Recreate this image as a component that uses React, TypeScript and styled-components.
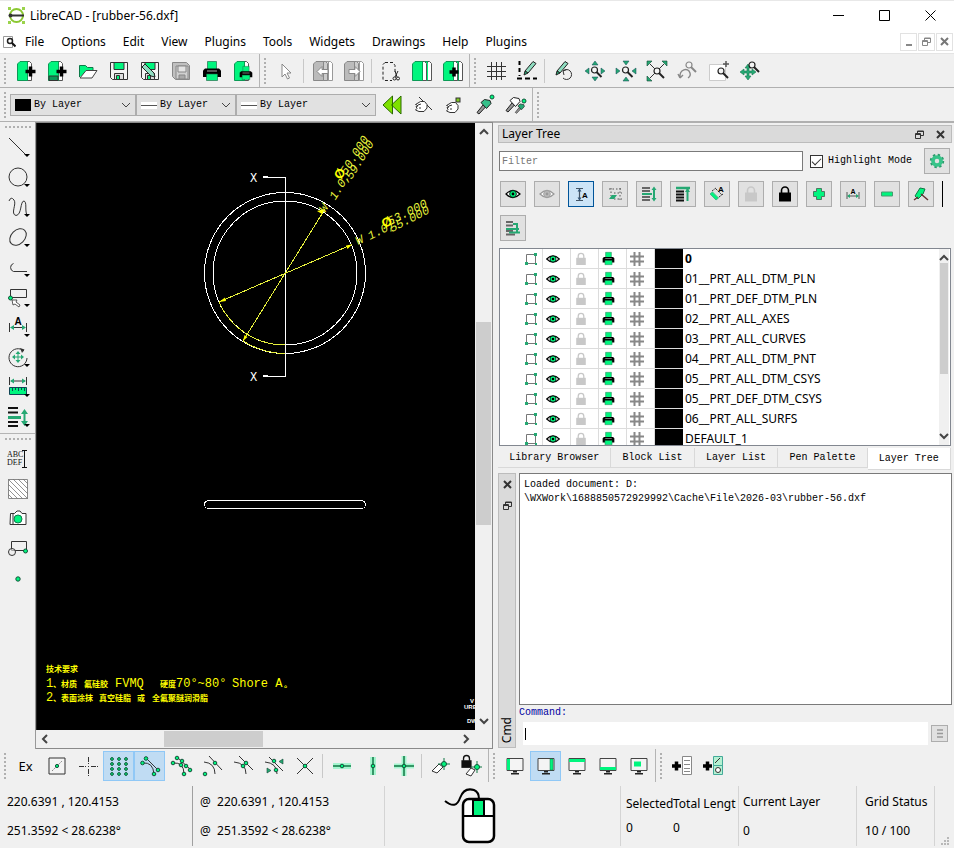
import React from "react";
import styled, { createGlobalStyle, css } from "styled-components";

const UI = `"Noto Sans", "Open Sans", sans-serif`;
const MONO = `"Liberation Mono", monospace`;
const GREEN = "#00f57e";
const TEAL = "#25a873";
const INK = "#333";

const Global = createGlobalStyle`
  *, *::before, *::after { box-sizing: border-box; }
  body { margin: 0; background: #f0f0f0; color: #000; font: 12px/16px ${UI}; }
  button, input, select { font: inherit; color: inherit; margin: 0; padding: 0; border: 0; background: none; border-radius: 0; }
  svg { display: block; flex: none; }
`;

/* ---------- small drawings shared by icons ---------- */

const Mag = ({ x, y, c = "#222" }: { x: number; y: number; c?: string }) => (
  <g fill="none" stroke={c}>
    <circle cx={x} cy={y} r="3" fill="#f4f4f4" strokeWidth="1.2" />
    <path d={`M${x + 2} ${y + 2}l5 5`} strokeWidth="2" />
  </g>
);
const Dot = ({ x, y, r = 2 }: { x: number; y: number; r?: number }) => (
  <circle cx={x} cy={y} r={r} fill={GREEN} stroke="#14533a" />
);
const Plus = ({ x, y, s = 5, w = 3, c = "#000" }: { x: number; y: number; s?: number; w?: number; c?: string }) => (
  <path d={`M${x - s} ${y}h${s * 2}M${x} ${y - s}v${s * 2}`} stroke={c} strokeWidth={w} fill="none" />
);
const Page = ({ x = 0, fill = GREEN, edge = "#555", back = "#fff" }: { x?: number; fill?: string; edge?: string; back?: string }) => (
  <g transform={`translate(${x} 0)`} stroke={edge}>
    <path d="M9 .5h3.500l2 2v17H9z" fill={back} />
    <path d="M3 .5h7.500v19H.5V3z" fill={fill} stroke={fill === GREEN ? "#0b9a56" : edge} />
  </g>
);
const Printer = () => (
  <g>
    <path d="M5.500.5h9v9h-9z" fill={GREEN} stroke="#155c3c" strokeWidth=".6" />
    <path d="M3 7.500h14l2 2V16H1V9.500z" fill="#000" />
    <path d="M5 10h10" stroke="#aaa" />
    <path d="M4.500 13h11v6.500h-11z" fill={GREEN} stroke="#155c3c" strokeWidth=".6" />
  </g>
);
const Floppy = ({ fill = GREEN, edge = "#333", body = "#f4f4f4" }: { fill?: string; edge?: string; body?: string }) => (
  <g stroke={edge}>
    <path d="M1.500 1.500h17v17h-15l-2-2z" fill={body} />
    <path d="M5 1.500h10v7H5z" fill={fill} />
    <path d="M5.500 12.500h9v6h-9z" fill="#ddd" />
    <path d="M7.500 14.500h3v4h-3z" fill={fill} />
  </g>
);
const Pencil = ({ x = 0, y = 0 }: { x?: number; y?: number }) => (
  <g transform={`translate(${x} ${y})`} stroke="#222">
    <path d="M3 11L11 1.500l3 2L6 13z" fill="#8fdcc0" />
    <path d="M3 11l-1 4 4-2z" fill={TEAL} />
  </g>
);
const Lock = ({ c }: { c: string }) => (
  <g>
    <path d="M6.500 9V6.500a3.500 3.500 0 0 1 7 0V9" fill="none" stroke={c} strokeWidth="1.600" />
    <path d="M4 8.500h12v9H4z" fill={c} />
  </g>
);
const Eye = ({ c, pupil = "#000" }: { c: string; pupil?: string }) => (
  <g>
    <path d="M3 10Q10 3 17 10Q10 17 3 10z" fill="#fff" stroke={pupil} strokeWidth="1.200" />
    <circle cx="10" cy="10" r="3.400" fill={c} stroke={pupil} strokeWidth=".8" />
    <circle cx="10" cy="10" r="1.400" fill={pupil} />
  </g>
);
const Monitor = ({ children }: { children: React.ReactNode }) => (
  <g>
    <path d="M2 2.500h16v12H2z" fill="#f4f4f4" stroke="#444" />
    {children}
    <path d="M8 15h4v1.500H8zM6 17h8v1.500H6z" fill="#222" />
  </g>
);
const Hand = ({ y = 0 }: { y?: number }) => (
  <g transform={`translate(0 ${y})`}>
    <path d="M2.500 9.500l5-3 4 0 2.500 3v3.500l-3 3.500H6l-3.500-1.500 1.500-1.500-1-2 2-.5-1-1z" fill="#fff" stroke="#333" />
    <path d="M5 10l3-1M6 13h2" stroke="#333" fill="none" />
  </g>
);
const Brush = ({ fill = TEAL }: { fill?: string }) => (
  <g stroke="#222">
    <path d="M2 17.500l6-7.500 2.500 2L4 19z" fill="#999" />
    <path d="M6 7.500l3.500-3L15 5.500l1 3-4.500 5z" fill={fill} />
  </g>
);

const K = INK;
const ICONS: Record<string, React.ReactNode> = {
  new: <><Page x={1} /><Plus x={14.5} y={10.5} w={3.5} /></>,
  newTemplate: <><Page x={1} /><path d="M2 15h9v4.500H2z" fill="#0a9a58" stroke="#333" /><Plus x={14.5} y={10.5} w={3.5} /></>,
  open: <><path d="M1.500 16V4.500h6l2 2H15V9" fill={GREEN} stroke="#0b7a48" /><path d="M2 17L8 9.500h11L14 17z" fill="#fff" stroke="#444" /></>,
  save: <Floppy />,
  saveAs: <><Floppy /><path d="M5 3l9 9 1 4-4-1-9-9z" fill="#8fdcc0" stroke="#222" /></>,
  saveAll: <><path d="M1.500 1.500h14l3 3v14h-14l-3-3z" fill="#c0c0c0" stroke="#888" /><path d="M5 5h12v13H5z" fill="#d0d0d0" stroke="#888" /><path d="M7 5h8v6H7z" fill="#e4e4e4" stroke="#888" /><path d="M8 14h6v4H8z" fill="#aaa" stroke="#888" /></>,
  print: <Printer />,
  preview: <><Page x={1} /><g transform="translate(6 5) scale(.7)"><Printer /></g></>,
  cursor: <path d="M6 3v13l3-3 2.500 5 2-1-2.500-5h4z" fill="#fff" stroke="#888" />,
  undo: <><Page x={5} fill="#e2e2e2" edge="#999" /><Page x={0} fill="#bbb" edge="#888" back="#ccc" /><path d="M4 10.500l5-5v3h6v4H9v3z" fill="#fff" stroke="#888" /></>,
  redo: <><Page x={5} fill="#e2e2e2" edge="#999" /><Page x={0} fill="#bbb" edge="#888" back="#ccc" /><path d="M16 10.500l-5-5v3H5v4h6v3z" fill="#fff" stroke="#888" /></>,
  cut: <><path d="M4 1.500h8l2 3v7M4 1.500l-2 2v15l2 1h7" fill="none" stroke="#222" strokeDasharray="3 2" /><path d="M14 10l2 6M17 10l-3 6" stroke="#222" /><circle cx="13.500" cy="17.500" r="1.500" fill="none" stroke="#222" /><circle cx="17" cy="17.500" r="1.500" fill="none" stroke="#222" /></>,
  copy: <><Page x={5} /><path d="M13 2h3v17h-3z" fill={GREEN} /><Page x={0} /></>,
  paste: <><Page x={5} /><Page x={0} /><Plus x={11} y={11} s={4.5} w={3.5} /></>,
  grid: <path d="M5.500 1v18M10.500 1v18M15.500 1v18M1 5.500h19M1 10.500h19M1 15.500h19" stroke="#333" />,
  draft: <><path d="M2.500 0v15" stroke="#000" strokeWidth="2" strokeDasharray="4 3" /><path d="M0 17.500h20" stroke="#000" strokeWidth="2" strokeDasharray="5 3" /><Pencil x={5} y={-1} /></>,
  redraw: <><Pencil x={0} y={-1} /><path d="M9 10a5 5 0 1 1 0 7M9 10l4-1.500M9 10l1 4" fill="none" stroke="#333" /></>,
  zoomIn: <><path d="M7 4l3-4 3 4zM7 16l3 4 3-4zM4 7l-4 3 4 3zM16 7l4 3-4 3z" fill={TEAL} stroke="#145" strokeWidth=".5" /><Mag x={9.5} y={9} /></>,
  zoomOut: <><path d="M7 0h6l-3 4zM7 20h6l-3-4zM0 7v6l4-3zM20 7v6l-4-3z" fill={TEAL} stroke="#145" strokeWidth=".5" /><Mag x={9.5} y={9} /></>,
  zoomAuto: <><path d="M3 3l14 14M17 3L3 17" stroke={K} /><path d="M0 0h5L0 5zM20 0h-5l5 5zM0 20h5l-5-5z" fill={TEAL} stroke="#143" strokeWidth=".6" /><Mag x={10} y={10} /></>,
  zoomPrev: <><path d="M2 17C1 8 10 6 12 12Q13 15 10 17M2 17l-2-4M2 17l3-3" fill="none" stroke="#888" strokeWidth="1.400" /><Mag x={11} y={4} c="#888" /></>,
  zoomWin: <><path d="M.5 3.500h16v16H.5z" fill="#fff" stroke="#ccc" /><Plus x={17} y={3} s={3} w={1.5} c="#555" /><Mag x={12} y={10} /></>,
  zoomPan: <><path d="M0 11l4-3v2h3V7H5l3-4 3 4H9v3h3V8l4 3-4 3v-2H9v3h2l-3 4-3-4h2v-3H4v2z" fill={TEAL} stroke="#157a50" strokeWidth=".6" /><Mag x={12} y={4} /></>,
  back: <path d="M10.500 1v18L1 10zM19 1v18L9.500 10z" fill="#7ee000" stroke="#2a6a00" />,
  handLine: <><path d="M6 2l13 13" stroke={K} /><Hand /></>,
  handBox: <><Hand y={1} /><rect x="12" y="3" width="4" height="4" fill="#7ec820" stroke="#333" /></>,
  brush: <><Brush fill="#35c08a" /><Dot x={17} y={2} /></>,
  brushes: <><g transform="translate(-2 -2)"><Brush fill="#fff" /></g><g transform="translate(8 6) scale(.65)"><Brush fill={TEAL} /></g><Dot x={18} y={6} /></>,
  line: <path d="M1 1l17 17" stroke={K} />,
  circle: <circle cx="10" cy="10" r="9" fill="none" stroke={K} />,
  spline: <path d="M1 4Q3-1 6 3C9 7 2 17 8 18.500C14 18 12 4 16 4C19 5 17 12 18.500 17" fill="none" stroke={K} />,
  ellipse: <ellipse cx="10" cy="10" rx="9.500" ry="6.800" fill="none" stroke={K} transform="rotate(-45 10 10)" />,
  polyline: <path d="M5.500 6.500A4.200 4.200 0 0 0 5.500 14.500H19" fill="none" stroke={K} />,
  select: <><path d="M2.500 2.500h16v8h-16z" fill="none" stroke={K} /><Dot x={2.5} y={11} /><path d="M4 13l1 5 2-1 4 3 1-2-4-3 1-2z" fill="#fff" stroke={K} strokeWidth=".8" /></>,
  dim: <><path d="M1.500 6v9M18.500 6v9M3 10.500h14" stroke={K} /><path d="M2 10.500l4-2.500v5zM18 10.500l-4-2.500v5z" fill={TEAL} /><text x="10" y="8" textAnchor="middle" fontFamily="Liberation Sans" fontWeight="700" fontSize="10">A</text></>,
  modify: <><path d="M16 4A9 9 0 1 0 19 11" fill="none" stroke={K} /><path d="M12 1l4.500 1.500L14 6z" fill={K} /><path d="M4 10l3-2.500v2h2.500V7h-2L10 4l2.500 3h-2v2.500H13v-2l3 2.500-3 2.500v-2h-2.500V13h2L10 16l-2.500-3h2v-2.500H7v2z" fill={TEAL} /></>,
  measure: <><path d="M1.500 0v8M18.500 0v8M3 4h14" stroke={K} /><path d="M2 4l4-2.500v5zM18 4l-4-2.500v5z" fill={TEAL} /><path d="M1.500 10.500h17v7h-17z" fill={GREEN} stroke="#145" /><path d="M4.500 10v4M7.500 10v3M10.500 10v4M13.500 10v3M16.500 10v4" stroke="#145" /></>,
  order: <><path d="M0 1h10M0 5.500h10M0 15h10M0 19h10" stroke="#111" strokeWidth="1.800" /><path d="M0 10.500h13" stroke={TEAL} strokeWidth="3" /><path d="M16.500 5v12" stroke={TEAL} strokeWidth="2" /><path d="M13 7l3.500-5L20 7zM13 14l3.500 5 3.500-5z" fill={TEAL} /></>,
  mtext: <><g fontFamily="Liberation Serif" fontSize="8" fill="#111"><text x="-1" y="8">ABC</text><text x="-1" y="16">DEF</text></g><path d="M14 1.500h5M14 18.500h5M16.500 1.500v17" stroke="#111" /></>,
  hatch: <><path d="M.5.5h19v19H.5z" fill="#fff" stroke="#888" /><path d="M0 15l5 5M0 10l10 10M0 5l15 15M0 0l20 20M5 0l15 15M10 0l10 10M15 0l5 5" stroke="#777" strokeWidth=".8" /></>,
  camera: <><path d="M2.500 4.500h4L9 2h3l2 2.500h4v11h-16zM5 5v10" fill="#fff" stroke={K} /><circle cx="10" cy="10" r="4" fill={GREEN} stroke="#157a50" /></>,
  block: <><path d="M3.500 2.500h15v9h-15z" fill="none" stroke={K} /><circle cx="4" cy="13" r="3.500" fill="#f0f0f0" fillOpacity=".6" stroke={K} /><Dot x={17.5} y={12} /></>,
  point: <Dot x={10} y={10} r={2.2} />,
  snapFree: <><path d="M2 2h16v16H2z" fill="#f4f4f4" stroke={K} /><path d="M5 15L15 5" stroke="#888" strokeDasharray="2 1" /><Dot x={10} y={10} r={1.6} /></>,
  snapCross: <path d="M1 10.500h7M13 10.500h7M10.500 1v7M10.500 13v7M10.500 10v1" stroke={K} strokeDasharray="5 1" />,
  snapGrid: <>{[3, 8, 13, 18].map((y) => [3, 10, 17].map((x) => <Dot key={`${x}-${y}`} x={x} y={y} r={1.4} />))}</>,
  snapEnd: <><path d="M3 7Q13 6 14 18M6 2l12 12" fill="none" stroke={K} /><Dot x={2.5} y={7} r={1.8} /><Dot x={6} y={2.5} r={1.8} /><Dot x={18} y={14} r={1.8} /><Dot x={14} y={18} r={1.8} /></>,
  snapEntity: <><path d="M2 7Q13 6 13 18M6 1l14 13" fill="none" stroke={K} />{[[2, 7], [6, 2], [11, 5], [10, 9], [15, 10], [19, 14], [13, 18]].map(([x, y]) => <Dot key={x} x={x} y={y} r={1.8} />)}</>,
  snapCenter: <><path d="M2 6Q13 7 13 18M7 0l13 14" fill="none" stroke={K} /><Dot x={13} y={7} r={1.8} /><Dot x={3} y={18} r={1.8} /></>,
  snapMiddle: <><path d="M1 6Q13 7 13 18M6 0l14 14" fill="none" stroke={K} /><Dot x={13} y={7} r={1.8} /><Dot x={10} y={10} r={1.8} /></>,
  snapDist: <><path d="M1 6Q13 7 13 18M5 1l14 14" fill="none" stroke={K} /><Dot x={10} y={5} r={1.8} /><Dot x={12} y={14} r={1.8} /><path d="M19 3v5l-4-2.500zM3 12v5l4-2.500z" fill={TEAL} stroke="#143" strokeWidth=".6" /></>,
  snapInter: <><path d="M2 2l16 16M18 2L2 18" stroke={K} /><Dot x={10} y={10} r={1.8} /></>,
  resH: <><path d="M1 10h18" stroke="#a5f5cf" strokeWidth="6" /><path d="M1 10h18" stroke="#174" strokeWidth="1.500" /><Dot x={10} y={10} r={1.8} /></>,
  resV: <><path d="M10 1v18" stroke="#a5f5cf" strokeWidth="6" /><path d="M10 1v18" stroke="#174" strokeWidth="1.500" /><Dot x={10} y={10} r={1.8} /></>,
  resO: <><path d="M0 10h20M10 0v20" stroke="#a5f5cf" strokeWidth="5" /><path d="M0 10h20M10 0v20" stroke="#174" strokeWidth="1.500" /><Dot x={10} y={10} r={1.8} /></>,
  relZero: <><path d="M1 15l7-7 4 3-6 6z" fill="#fff" stroke={K} /><path d="M7 8h12M13 2v12" stroke="#174" /><Dot x={13} y={8} r={2.5} /></>,
  lockZero: <><g transform="translate(-4 -3) scale(.85)"><Lock c="#111" /></g><path d="M4 18l5-6 4 2-4 6z" fill="#fff" stroke={K} /><path d="M9 11h11M15 5v12" stroke="#174" /><Dot x={15} y={11} r={2.5} /></>,
  dockL: <Monitor><path d="M2 3h3v11H2z" fill={GREEN} /></Monitor>,
  dockR: <Monitor><path d="M14 3h3v11h-3z" fill={GREEN} stroke="#157a50" strokeWidth=".5" /></Monitor>,
  dockT: <Monitor><path d="M2 3h16v3H2z" fill={GREEN} /></Monitor>,
  dockB: <Monitor><path d="M2 11h16v3H2z" fill={GREEN} /></Monitor>,
  dockF: <Monitor><path d="M5 5.500h7v5H5z" fill={GREEN} /></Monitor>,
  addMenu: <><Plus x={4.5} y={10} s={4.5} w={3.5} /><path d="M10.500.5h9v18h-9zM12 4.500h6M12 8.500h6M12 12.500h6M12 15.500h6" fill="#fff" stroke="#888" /></>,
  addBar: <><Plus x={4.5} y={10} s={4.5} w={3.5} /><path d="M10.500.5h9v9h-9zM10.500 9.500h9v9h-9z" fill="#b5f0d2" stroke="#4a9" /><path d="M12 7l5-5" stroke={K} /><circle cx="15" cy="14" r="2.500" fill="#fff" stroke={K} /></>,
  eye: <Eye c={GREEN} />,
  eyeOff: <Eye c="#bbb" pupil="#999" />,
  textDim: <><path d="M5 4.500h7M5 16.500h7M8.500 5v11" stroke="#456" strokeWidth="1.200" /><path d="M6.500 7.500l2-3 2 3zM6.500 13.500l2 3 2-3z" fill="#357" /><text x="11" y="14" fontSize="8" fontWeight="700" fontFamily="Liberation Sans">A</text></>,
  construct: <><path d="M4 5h13M9 15h8M6 4v8M15 4v13M9 9h8" stroke="#555" strokeDasharray="1.500 2" /><path d="M4 15l3-4h5l-3 4z" fill={TEAL} /></>,
  layers: <><path d="M3 4h8M3 7h8M3 13h8M3 16h8" stroke="#666" strokeWidth="1.800" /><path d="M3 10h10" stroke={TEAL} strokeWidth="2" /><path d="M15 5v10" stroke={TEAL} strokeWidth="2" /><path d="M12.500 6L15 2.500 17.500 6zM12.500 14l2.500 3.500 2.500-3.500z" fill={TEAL} /></>,
  layersTop: <><path d="M3 7.500h8M3 10.500h8M3 13.500h8M3 16.500h8" stroke="#111" strokeWidth="1.800" /><path d="M3 4h14" stroke={TEAL} strokeWidth="2.500" /><path d="M14.500 5v12" stroke={TEAL} strokeWidth="2" /><path d="M12 8l2.500-4L17 8z" fill={TEAL} /></>,
  info: <><path d="M3 10l6 6 2.500-2L5.500 8z" fill={GREEN} stroke="#4b8" /><path d="M5 7l4-3M12 13l4-3M9 5l6 6" stroke={K} strokeDasharray="2 1" fill="none" /><text x="11" y="8" fontSize="8" fontWeight="700" fontFamily="Liberation Sans">A</text></>,
  lockOff: <Lock c="#c8c8c8" />,
  lock: <Lock c="#000" />,
  add: <path d="M7.500 4.500h5v3h3v5h-3v3h-5v-3h-3v-5h3z" fill={GREEN} stroke="#4a7a60" />,
  dimBtn: <><path d="M4 8v7M16 8v7M5 12h10" stroke="#555" /><path d="M4 12l3-2v4zM16 12l-3-2v4z" fill={TEAL} /><text x="10" y="10" textAnchor="middle" fontSize="7" fontWeight="700" fontFamily="Liberation Sans">A</text></>,
  remove: <path d="M4.500 8h11v4h-11z" fill={GREEN} stroke="#4a9a70" />,
  pen: <><path d="M4 12l5-8 5 1-2 5-5 5z" fill={GREEN} stroke="#174" /><path d="M3 16l4-3M10 10l7 6" stroke="#633" strokeWidth="1.500" /></>,
  layersMove: <><path d="M3 4h7M3 7.500h7M3 13h7M3 16.500h9" stroke="#666" strokeWidth="1.800" /><path d="M3 11h13M10 6h4v8M6 14.500h11" stroke={TEAL} strokeWidth="2" fill="none" /></>,
  gear: <><circle cx="10" cy="10" r="6.500" fill="none" stroke="#2a9a6a" strokeWidth="3" strokeDasharray="2.500 2.600" /><circle cx="10" cy="10" r="4.500" fill="none" stroke="#37c489" strokeWidth="4" /></>,
};

const Icon = ({ name, size = 20 }: { name: string; size?: number }) => (
  <svg width={size} height={size} viewBox="0 0 20 20" overflow="visible" aria-hidden>{ICONS[name]}</svg>
);

/* ---------- window frame ---------- */

const Window = styled.div`
  min-height: 100vh;
  display: flex;
  flex-direction: column;
  background: #f0f0f0;
`;
const TitleBar = styled.header`
  display: flex;
  align-items: center;
  height: 30px;
  padding-left: 8px;
  gap: 5px;
  background: #fff;
  border-top: 1px solid #e8e8e8;
`;
const Title = styled.h1`
  flex: 1;
  margin: 0;
  font: 12px/16px ${UI};
`;
const CaptionRow = styled.div`
  display: flex;
  padding-right: 1px;
`;
const CaptionButton = styled.button`
  width: 46px;
  height: 29px;
  display: grid;
  place-items: center;
`;
const MenuBar = styled.nav`
  display: flex;
  align-items: center;
  height: 24px;
  padding: 0 1px 0 3px;
  background: #fff;
  border-bottom: 1px solid #e4e4e4;
`;
const MenuItems = styled.div`
  display: flex;
  flex: 1;
  gap: 17px;
  padding-left: 9px;
`;
const ChildButton = styled.button`
  width: 17px;
  height: 18px;
  margin-left: 1px;
  display: grid;
  place-items: center;
  border: 1px solid #e2e2e2;
`;

/* ---------- toolbars ---------- */

const ToolRow = styled.div<{ $last?: boolean }>`
  display: flex;
  align-items: stretch;
  height: 34px;
  border-bottom: 1px solid ${(p) => (p.$last ? "transparent" : "#b0b0b0")};
`;
const Section = styled.div<{ $open?: boolean }>`
  display: flex;
  align-items: center;
  padding-right: 1px;
  border-right: 1px solid ${(p) => (p.$open ? "transparent" : "#b4b4b4")};
`;
const Grip = styled.i<{ $across?: boolean }>`
  flex: none;
  ${(p) =>
    p.$across
      ? css`
          width: 26px;
          height: 2px;
          margin: 4px 0 0 5px;
          background: repeating-linear-gradient(90deg, #b0b0b0 0 2px, transparent 2px 4px);
        `
      : css`
          width: 2px;
          height: 26px;
          margin: 0 4px;
          background: repeating-linear-gradient(#b0b0b0 0 2px, transparent 2px 4px);
        `}
`;
const ToolButton = styled.button<{ $on?: boolean }>`
  width: 31px;
  height: 30px;
  display: grid;
  place-items: center;
  border: 1px solid ${(p) => (p.$on ? "#90c8f6" : "transparent")};
  background: ${(p) => (p.$on ? "#c0dcf3" : "none")};
  font-size: 13px;
  &:hover { background: #d8e9f7; }
`;
const Divider = styled.i`
  width: 1px;
  height: 24px;
  margin: 0 3px 0 2px;
  background: #c8c8c8;
`;
const ComboBox = styled.label<{ $width: number }>`
  display: flex;
  align-items: center;
  width: ${(p) => p.$width}px;
  height: 22px;
  padding: 0 4px;
  gap: 3px;
  background: #e1e1e1;
  border: 1px solid #adadad;
  font: 10px/14px ${MONO};
  select { flex: 1; min-width: 0; appearance: none; outline: 0; }
`;

function Tools({ items, on = [], open, children }: { items: string[]; on?: string[]; open?: boolean; children?: React.ReactNode }) {
  return (
    <Section $open={open}>
      <Grip />
      {children}
      {items.map((n, i) =>
        n === "|" ? <Divider key={i} /> : (
          <ToolButton key={i} $on={on.includes(n)} aria-label={n}>{n === "Ex" ? "Ex" : <Icon name={n} />}</ToolButton>
        )
      )}
    </Section>
  );
}

const Chevron = ({ d = "M1 3l4 4 4-4", w = 1 }: { d?: string; w?: number }) => (
  <svg width="10" height="10" aria-hidden><path d={d} fill="none" stroke="#444" strokeWidth={w} /></svg>
);
function Combo({ label, width, swatch }: { label: string; width: number; swatch?: boolean }) {
  return (
    <ComboBox $width={width}>
      <svg width="16" height="12" aria-hidden>
        {swatch ? <rect width="16" height="12" /> : <><rect y="3" width="16" height="7" fill="#fff" /><path d="M0 6.500h16" stroke="#555" /></>}
      </svg>
      <select aria-label={label}><option>By Layer</option></select>
      <Chevron />
    </ComboBox>
  );
}

/* ---------- workspace ---------- */

const Workspace = styled.main`
  flex: 1;
  display: flex;
  align-items: stretch;
  min-height: 0;
`;
const SideBar = styled.div`
  width: 36px;
  flex: none;
  border-right: 1px solid #999;
`;
const SideGroup = styled.div`
  display: flex;
  flex-direction: column;
  padding-bottom: 1px;
  & + & { border-top: 1px solid #b4b4b4; }
`;
const SideButton = styled.button`
  width: 34px;
  height: 30px;
  display: flex;
  align-items: center;
  padding-left: 8px;
  position: relative;
`;
const SideButtons = styled.div`padding-top: 4px;`;
const DropMark = styled.i`
  position: absolute;
  right: 4px;
  bottom: 5px;
  border: solid transparent;
  border-width: 3px 3px 0;
  border-top-color: #000;
`;
const Canvas = styled.section`
  flex: 1;
  min-width: 0;
  display: grid;
  grid-template: minmax(0, 1fr) 18px / minmax(0, 1fr) 17px;
  border: solid #8a8a8a;
  border-width: 1px 1px 1px 0;
  background: #f0f0f0;
`;
const Drawing = styled.svg`
  width: 100%;
  height: 100%;
  min-height: 400px;
  background: #000;
  border-left: 1px solid #222;
`;
const Scroll = styled.div<{ $across?: boolean }>`
  display: flex;
  flex-direction: ${(p) => (p.$across ? "row" : "column")};
  align-items: center;
  justify-content: space-between;
  padding: ${(p) => (p.$across ? "0 4px" : "4px 0")};
  background: #f0f0f0;
`;
const Track = styled.div<{ $across?: boolean }>`
  flex: 1;
  align-self: stretch;
  display: flex;
  flex-direction: ${(p) => (p.$across ? "row" : "column")};
  padding: ${(p) => (p.$across ? "1px 0" : "0 1px")};
`;
const Space = styled.i<{ $n: number }>`flex: ${(p) => p.$n} 0 0;`;
const Thumb = styled.i<{ $n: number }>`
  flex: ${(p) => p.$n} 0 0;
  background: #cdcdcd;
`;
const ScrollButton = styled.button`display: block;`;

function ScrollBar({ parts, across }: { parts: [number, number, number]; across?: boolean }) {
  return (
    <Scroll $across={across}>
      <ScrollButton aria-label="Scroll back"><Chevron w={2} d={across ? "M7 1L3 5l4 4" : "M1 7l4-4 4 4"} /></ScrollButton>
      <Track $across={across}><Space $n={parts[0]} /><Thumb $n={parts[1]} /><Space $n={parts[2]} /></Track>
      <ScrollButton aria-label="Scroll forward"><Chevron w={2} d={across ? "M3 1l4 4-4 4" : "M1 3l4 4 4-4"} /></ScrollButton>
    </Scroll>
  );
}

const Strong = styled.tspan`
  font-size: 12px;
  font-weight: 400;
`;

function CadDrawing() {
  return (
    <Drawing>
      <g fill="none" stroke="#fff" shapeRendering="crispEdges">
        <circle cx="248" cy="150" r="80.500" />
        <circle cx="248" cy="150" r="72" />
        <path d="M226 54.500h22.500v199H226" />
        <path d="M226 54h5M226 253h5" strokeWidth="2" />
        <rect x="167.500" y="377.500" width="161" height="8" rx="4" />
      </g>
      <g fill="none" stroke="#e6f03c" shapeRendering="crispEdges">
        <path d="M182 179L315 121.500M206 218L288 86" />
        <path d="M182 179A72 72 0 0 0 248 222M206 218A80.500 80.500 0 0 0 248 230.500" />
      </g>
      <path d="M182 179l6-4.500 1 3.500zM315 121.500l-6 1 1.500 3.500zM206 218l1.500-6 3 2zM288 86l-8 2 5 3z" fill="#ff0" />
      <g fill="#fff" fontFamily="Liberation Mono" fontSize="12">
        <text x="213" y="59">X</text>
        <text x="213" y="258">X</text>
      </g>
      <g fill="#e9f53c" fontFamily="Liberation Mono" fontSize="12" fontStyle="italic">
        <g transform="translate(288 90) rotate(-58)">
          <text x="0" y="0">W</text><text x="16" y="2">1.0,</text>
          <text x="42" y="5">59.000</text><text x="43" y="-2">50.000</text>
          <text x="36" y="-4" fontFamily="Liberation Sans" fontStyle="normal" fontWeight="700" fontSize="13" fill="#ff0">Ø</text>
        </g>
        <g transform="translate(321 122) rotate(-27)">
          <text x="0" y="0">W</text><text x="13" y="1">1.0,</text>
          <text x="36" y="4">55.000</text><text x="37" y="-3">53.000</text>
          <text x="31" y="-3" fontFamily="Liberation Sans" fontStyle="normal" fontWeight="700" fontSize="13" fill="#ff0">Ø</text>
        </g>
      </g>
      <g fill="#ff0" fontFamily="'Liberation Mono', 'Noto Sans CJK SC', monospace" fontSize="8" fontWeight="700">
        <text x="9" y="549">技术要求</text>
        <text y="564"><Strong x="9">1</Strong><tspan x="16">、</tspan><tspan x="24">材质</tspan><tspan x="47">氟硅胶</tspan><Strong x="78">FVMQ</Strong><tspan x="123">硬度</tspan><Strong x="139">70°~80°</Strong><Strong x="195">Shore A</Strong><tspan x="247">。</tspan></text>
        <text y="578"><Strong x="9">2</Strong><tspan x="16">、</tspan><tspan x="24">表面涂抹</tspan><tspan x="62">真空硅脂</tspan><tspan x="100">或</tspan><tspan x="115">全氟聚醚润滑脂</tspan></text>
      </g>
      <g fill="#fff" fontFamily="Liberation Sans" fontWeight="700" fontSize="6">
        <text x="433" y="580">V</text>
        <text x="427" y="586">URE</text>
        <text x="430" y="600">DW</text>
      </g>
    </Drawing>
  );
}

/* ---------- docks ---------- */

const Docks = styled.aside`
  width: 461px;
  flex: none;
  display: flex;
  flex-direction: column;
  padding: 2px 2px 1px 5px;
  border-top: 1px solid #b0b0b0;
`;
const DockTitle = styled.div`
  display: flex;
  align-items: center;
  gap: 12px;
  height: 18px;
  padding: 0 6px 0 3px;
  background: #dadada;
  border: 1px solid #bcbcbc;
  h2 { flex: 1; margin: 0; font: 12px/16px ${UI}; }
`;
const FilterRow = styled.div`
  display: flex;
  align-items: center;
  gap: 7px;
  padding: 5px 2px 0 1px;
`;
const FilterInput = styled.input.attrs({ placeholder: "Filter", "aria-label": "Filter" })`
  flex: 1;
  min-width: 0;
  height: 20px;
  padding: 0 2px;
  background: #fff;
  border: 1px solid #7a7a7a;
  font: 10px/14px ${MONO};
  &::placeholder { color: #777; opacity: 1; }
`;
const CheckLabel = styled.label`
  display: flex;
  align-items: center;
  gap: 5px;
  margin-right: 5px;
  font: 10px/14px ${MONO};
`;
const Check = styled.input.attrs({ type: "checkbox" })`
  appearance: none;
  width: 13px;
  height: 13px;
  display: grid;
  place-items: center;
  background: #fff;
  border: 1px solid #333;
  &:checked::after {
    content: "";
    width: 9px;
    height: 5px;
    border: solid #333;
    border-width: 0 0 1px 1px;
    transform: translateY(-1px) rotate(-45deg);
  }
`;
const FlatButton = styled.button<{ $on?: boolean; $small?: boolean }>`
  width: ${(p) => (p.$small ? 17 : 26)}px;
  height: ${(p) => (p.$small ? 17 : 26)}px;
  display: grid;
  place-items: center;
  background: ${(p) => (p.$on ? "#cce4f7" : "#e1e1e1")};
  border: 1px solid ${(p) => (p.$on ? "#005499" : "#adadad")};
`;
const LayerTools = styled.div`
  display: flex;
  flex-wrap: wrap;
  gap: 8px;
  padding: 7px 2px;
`;
const Bar = styled.i`
  width: 1px;
  height: 26px;
  background: #000;
`;
const LayerList = styled.div`
  display: flex;
  height: 198px;
  margin: 0 1px;
  padding: 0 1px;
  background: #fff;
  border: 1px solid #828790;
`;
const LayerView = styled.div`
  flex: 1;
  overflow: hidden;
`;
const LayerTable = styled.table`
  width: 100%;
  border-collapse: separate;
  border-spacing: 0;
  table-layout: fixed;
  td { height: 20px; padding: 0; }
`;
const IconCell = styled.td<{ $first?: boolean; $pad?: number }>`
  width: ${(p) => (p.$first ? 42 : 28)}px;
  border-right: 1px solid #dcdcdc;
  border-bottom: 1px solid ${(p) => (p.$first ? "transparent" : "#dcdcdc")};
  svg { margin-left: ${(p) => (p.$first ? 24 : p.$pad)}px; }
`;
const ColorCell = styled.td`
  width: 28px;
  background: #000;
  border-bottom: 1px solid #ddd;
`;
const NameCell = styled.td<{ $bold?: boolean }>`
  font-weight: ${(p) => (p.$bold ? 700 : 400)};
  line-height: 16px;
  div { padding-left: 2px; white-space: nowrap; }
`;
const TabRow = styled.div`
  display: flex;
  height: 24px;
  margin: 0 1px 3px 0;
  padding-top: 2px;
`;
const Tab = styled.button<{ $on?: boolean }>`
  flex: 1 0 auto;
  height: ${(p) => (p.$on ? 22 : 20)}px;
  padding: 0 10px;
  background: ${(p) => (p.$on ? "#fff" : "#f0f0f0")};
  border: solid #d9d9d9;
  border-width: 0 1px 1px 0;
  font: 10px/14px ${MONO};
`;
const CmdDock = styled.section`
  flex: 1;
  display: flex;
  gap: 3px;
`;
const CmdStrip = styled.div`
  width: 18px;
  display: flex;
  flex-direction: column;
  align-items: center;
  gap: 12px;
  padding: 6px 0 4px;
  background: #dadada;
  border: 1px solid #bcbcbc;
  h2 {
    margin: auto 0 0;
    font: 12px/16px ${UI};
    writing-mode: vertical-rl;
    transform: rotate(180deg);
  }
`;
const CmdBody = styled.div`
  flex: 1;
  min-width: 0;
  display: flex;
  flex-direction: column;
  font: 10px/14px ${MONO};
`;
const CmdOutput = styled.output`
  flex: 1;
  padding: 4px;
  background: #fff;
  border: 1px solid #7a7a7a;
  overflow-wrap: anywhere;
`;
const Prompt = styled.label`
  padding: 1px 0 2px;
  color: #0000a0;
`;
const CmdLine = styled.div`
  display: flex;
  align-items: center;
  gap: 3px;
  padding: 0 4px 3px;
`;
const CmdInput = styled.div`
  flex: 1;
  display: flex;
  align-items: center;
  height: 23px;
  padding-left: 2px;
  background: #fff;
  input { flex: 1; min-width: 0; outline: 0; }
`;
const Caret = styled.i`
  width: 1px;
  height: 12px;
  background: #000;
`;

const FloatIcon = ({ c = "#333" }: { c?: string }) => (
  <svg width="9" height="9" aria-hidden><path d="M2.500 3V1h6v4.500H6M.5 3.500h5v5h-5zM3 1.500h5M1 4.500h4" fill="none" stroke={c} /></svg>
);
const CloseIcon = ({ c = "#333" }: { c?: string }) => (
  <svg width="9" height="9" aria-hidden><path d="M1 1l7 7M8 1L1 8" stroke={c} strokeWidth="2" /></svg>
);

const SelectIcon = () => (
  <svg width="12" height="12" aria-hidden>
    <path d="M1.500 1.500h9v9h-9z" fill="#fff" stroke="#777" />
    <path d="M0 9h3v3H0zM9 0h3v3H9zM10 10h2v2h-2z" fill={TEAL} />
  </svg>
);
const HashIcon = () => (
  <svg width="14" height="14" aria-hidden><path d="M4.500 0v14M9.500 0v14M0 4.500h14M0 9.500h14" stroke="#888" strokeWidth="2" /></svg>
);

const LAYERS = ["0", "01__PRT_ALL_DTM_PLN", "01__PRT_DEF_DTM_PLN", "02__PRT_ALL_AXES", "03__PRT_ALL_CURVES", "04__PRT_ALL_DTM_PNT", "05__PRT_ALL_DTM_CSYS", "05__PRT_DEF_DTM_CSYS", "06__PRT_ALL_SURFS", "DEFAULT_1"];
const LAYER_TOOLS = ["eye", "eyeOff", "textDim", "construct", "layers", "layersTop", "info", "lockOff", "lock", "add", "dimBtn", "remove", "pen"];
const TABS = ["Library Browser", "Block List", "Layer List", "Pen Palette", "Layer Tree"];
const MENUS = ["File", "Options", "Edit", "View", "Plugins", "Tools", "Widgets", "Drawings", "Help", "Plugins"];

/* ---------- status bar ---------- */

const StatusBar = styled.footer`
  display: flex;
  height: 65px;
  padding: 3px 0 2px;
`;
const Status = styled.div<{ $w: number; $dark?: boolean; $pad?: number }>`
  width: ${(p) => p.$w}px;
  display: flex;
  flex-direction: column;
  justify-content: center;
  gap: 13px;
  padding-left: ${(p) => p.$pad ?? 7}px;
  border-right: 1px solid ${(p) => (p.$dark ? "#a0a0a0" : "#d4d4d4")};
  white-space: pre;
`;
const MouseArea = styled.div`
  flex: 1;
  display: grid;
  place-items: center;
  padding: 0 68px 0 2px;
  border-right: 1px solid #d4d4d4;
`;
const Totals = styled.dl`
  width: 118px;
  margin: 0;
  padding: 2px 2px 0 5px;
  display: grid;
  grid-template: 1fr 1fr / 47px minmax(0, 1fr);
  align-items: center;
  border-right: 1px solid #d4d4d4;
  dt, dd { margin: 0; overflow: hidden; white-space: nowrap; }
  dd { padding-bottom: 8px; }
  dt { padding-top: 2px; }
`;
const Resize = styled.div`
  width: 19px;
  display: flex;
  align-items: flex-end;
  justify-content: flex-end;
  padding-right: 4px;
`;

export default function App() {
  return (
    <Window>
      <Global />
      <TitleBar>
        <svg width="17" height="17" aria-hidden>
          <circle cx="8.500" cy="8.500" r="6.500" fill="none" stroke="#8bc832" strokeWidth="2" />
          <path d="M0 0h3v3H0zM14 0h3v3h-3zM0 14h3v3H0zM14 14h3v3h-3z" fill="#9bd34c" />
          <path d="M1 8.500h15" stroke="#333" strokeWidth="2" /><circle cx="2.500" cy="8.500" r="2" fill="#333" />
        </svg>
        <Title>LibreCAD - [rubber-56.dxf]</Title>
        <CaptionRow>
          <CaptionButton aria-label="Minimize"><svg width="11" height="11"><path d="M0 5.500h11" stroke="#000" /></svg></CaptionButton>
          <CaptionButton aria-label="Maximize"><svg width="11" height="11"><path d="M.5.5h10v10H.5z" fill="none" stroke="#000" /></svg></CaptionButton>
          <CaptionButton aria-label="Close"><svg width="11" height="11"><path d="M.5.5l10 10M10.500.5l-10 10" stroke="#000" /></svg></CaptionButton>
        </CaptionRow>
      </TitleBar>
      <MenuBar>
        <svg width="13" height="14" aria-hidden>
          <path d="M.5 1.500h9v11h-9z" fill="#fff" stroke="#999" />
          <circle cx="7" cy="6" r="2.500" fill="none" stroke="#222" strokeWidth="1.500" /><path d="M9 8l3.500 3.500" stroke="#111" strokeWidth="2" />
        </svg>
        <MenuItems>{MENUS.map((m, i) => <button key={i}>{m}</button>)}</MenuItems>
        <ChildButton aria-label="Minimize drawing"><svg width="9" height="9"><path d="M2 8h6" stroke="#888" strokeWidth="2" /></svg></ChildButton>
        <ChildButton aria-label="Restore drawing"><FloatIcon c="#888" /></ChildButton>
        <ChildButton aria-label="Close drawing"><CloseIcon c="#777" /></ChildButton>
      </MenuBar>

      <ToolRow>
        <Tools items={["new", "newTemplate", "open", "save", "saveAs", "saveAll", "print", "preview"]} />
        <Tools items={["cursor", "|", "undo", "redo", "|", "cut", "copy", "paste"]} />
        <Tools open items={["grid", "draft", "|", "redraw", "zoomIn", "zoomOut", "zoomAuto", "zoomPrev", "zoomWin", "zoomPan"]} />
      </ToolRow>
      <ToolRow>
        <Tools items={["back", "handLine", "handBox", "brush", "brushes"]}>
          <Combo label="Colour" width={126} swatch />
          <Combo label="Width" width={100} />
          <Combo label="Line type" width={140} />
        </Tools>
        <Tools open items={[]} />
      </ToolRow>

      <Workspace>
        <SideBar>
          <SideGroup>
            <Grip $across />
            <SideButtons>
              {["line", "circle", "spline", "ellipse", "polyline", "select", "dim", "modify", "measure", "order"].map((n) => (
                <SideButton key={n} aria-label={n}><Icon name={n} /><DropMark /></SideButton>
              ))}
            </SideButtons>
          </SideGroup>
          <SideGroup>
            <Grip $across />
            <SideButtons>
              {["mtext", "hatch", "camera", "block", "point"].map((n) => (
                <SideButton key={n} aria-label={n}><Icon name={n} /></SideButton>
              ))}
            </SideButtons>
          </SideGroup>
        </SideBar>

        <Canvas>
          <CadDrawing />
          <ScrollBar parts={[184, 202, 190]} />
          <ScrollBar across parts={[114, 98, 198]} />
        </Canvas>

        <Docks>
          <DockTitle>
            <h2>Layer Tree</h2>
            <button aria-label="Float"><FloatIcon /></button>
            <button aria-label="Close"><CloseIcon /></button>
          </DockTitle>
          <FilterRow>
            <FilterInput />
            <CheckLabel><Check defaultChecked />Highlight Mode</CheckLabel>
            <FlatButton aria-label="Settings"><Icon name="gear" size={18} /></FlatButton>
          </FilterRow>
          <LayerTools>
            {LAYER_TOOLS.map((n) => <FlatButton key={n} $on={n === "textDim"} aria-label={n}><Icon name={n} /></FlatButton>)}
            <Bar />
            <FlatButton aria-label="layersMove"><Icon name="layersMove" /></FlatButton>
          </LayerTools>
          <LayerList>
            <LayerView>
              <LayerTable>
                <tbody>
                  {LAYERS.map((name, i) => (
                    <tr key={name}>
                      <IconCell $first><SelectIcon /></IconCell>
                      <IconCell $pad={1}><Icon name="eye" size={18} /></IconCell>
                      <IconCell $pad={2}><Icon name="lockOff" size={16} /></IconCell>
                      <IconCell $pad={3}><Icon name="print" size={13} /></IconCell>
                      <IconCell $pad={3}><HashIcon /></IconCell>
                      <ColorCell />
                      <NameCell $bold={i === 0}><div>{name}</div></NameCell>
                    </tr>
                  ))}
                </tbody>
              </LayerTable>
            </LayerView>
            <ScrollBar parts={[0, 112, 57]} />
          </LayerList>
          <TabRow role="tablist">
            {TABS.map((t) => <Tab key={t} role="tab" $on={t === "Layer Tree"}>{t}</Tab>)}
          </TabRow>
          <CmdDock>
            <CmdStrip>
              <button aria-label="Close"><CloseIcon /></button>
              <button aria-label="Float"><FloatIcon /></button>
              <h2>Cmd</h2>
            </CmdStrip>
            <CmdBody>
              <CmdOutput>Loaded document: D:<br />\WXWork\1688850572929992\Cache\File\2026-03\rubber-56.dxf</CmdOutput>
              <Prompt htmlFor="command">Command:</Prompt>
              <CmdLine>
                <CmdInput><Caret /><input id="command" /></CmdInput>
                <FlatButton $small aria-label="Command options">
                  <svg width="8" height="9" aria-hidden><path d="M1 1h6M1 4.500h6M1 8h6" stroke="#999" strokeWidth="1.500" /></svg>
                </FlatButton>
              </CmdLine>
            </CmdBody>
          </CmdDock>
        </Docks>
      </Workspace>

      <ToolRow $last>
        <Tools
          items={["Ex", "snapFree", "snapCross", "snapGrid", "snapEnd", "snapEntity", "snapCenter", "snapMiddle", "snapDist", "snapInter", "|", "resH", "resV", "resO", "|", "relZero", "lockZero"]}
          on={["snapGrid", "snapEnd"]}
        />
        <Tools items={["dockL", "dockR", "dockT", "dockB", "dockF"]} on={["dockR"]} />
        <Tools open items={["addMenu", "addBar"]} />
      </ToolRow>

      <StatusBar>
        <Status $w={193} $dark><span>220.6391 , 120.4153</span><span>251.3592 &lt; 28.6238°</span></Status>
        <Status $w={192}><span>@  220.6391 , 120.4153</span><span>@  251.3592 &lt; 28.6238°</span></Status>
        <MouseArea>
          <svg width="52" height="56" aria-label="Mouse" fill="none" stroke="#000" strokeWidth="2">
            <path d="M1 13q11 9 15-3q4-11 14-8q5 2 5 9" />
            <rect x="19" y="11" width="31" height="43" rx="6" fill="#fff" strokeWidth="2.500" />
            <path d="M29 12h11v16H29z" fill={GREEN} /><path d="M19 28h31" />
          </svg>
        </MouseArea>
        <Totals><dt>Selected</dt><dt>Total Length</dt><dd>0</dd><dd>0</dd></Totals>
        <Status $w={118} $pad={4}><span>Current Layer</span><span>0</span></Status>
        <Status $w={78} $pad={8}><span>Grid Status</span><span>10 / 100</span></Status>
        <Resize>
          <svg width="9" height="9" aria-hidden><path d="M6 0h2v2H6zM3 3h2v2H3zM6 3h2v2H6zM0 6h2v2H0zM3 6h2v2H3zM6 6h2v2H6z" fill="#b8b8b8" /></svg>
        </Resize>
      </StatusBar>
    </Window>
  );
}
